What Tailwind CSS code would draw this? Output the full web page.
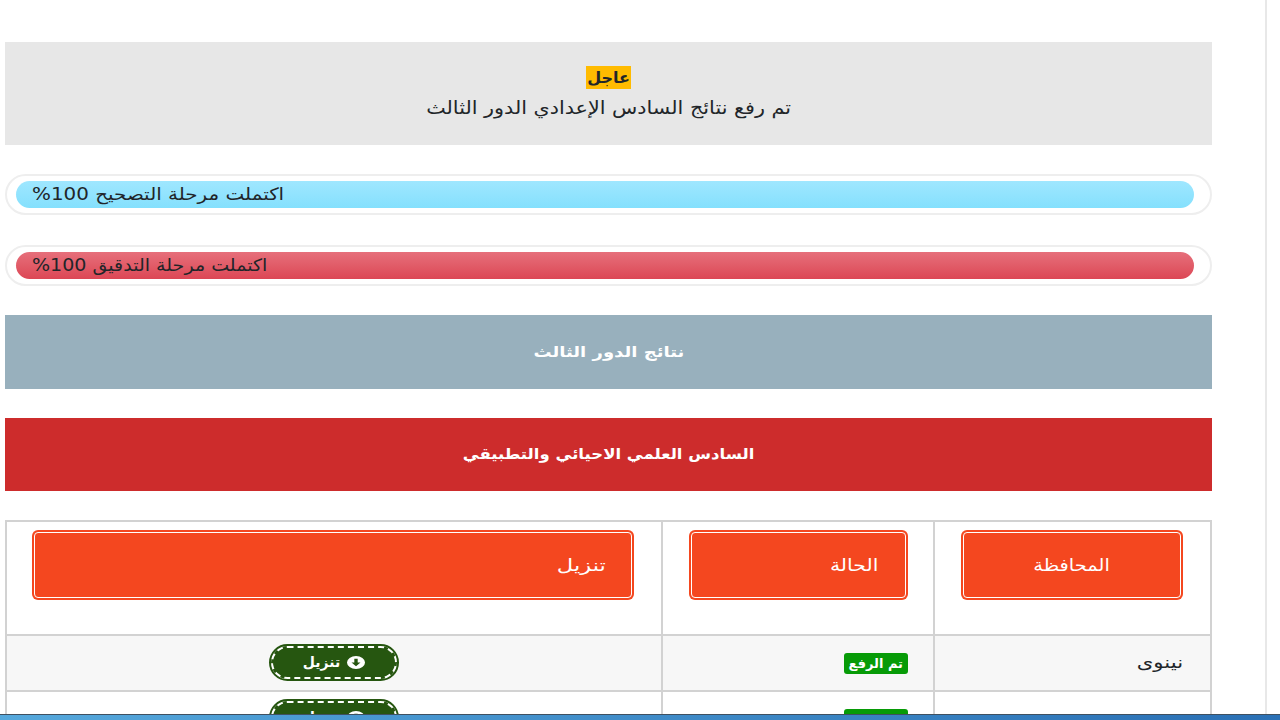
<!DOCTYPE html>
<html lang="ar">
<head>
<meta charset="UTF-8">
<title>نتائج الدور الثالث</title>
<script src="https://cdn.jsdelivr.net/npm/@tailwindcss/browser@4"></script>
</head>
<body class="h-[720px] overflow-hidden bg-white font-['DejaVu_Sans',sans-serif] text-[#212529]">
<div class="relative h-[720px] overflow-hidden">
  <div class="h-[720px] w-[1267px] border-r-2 border-[#e8e8e8] pl-[5px] pr-[53px] pt-[42px]">
   <div dir="rtl">

    <div class="flex h-[103px] flex-col items-center bg-[#e7e7e7] pt-[24px]">
      <span class="bg-[#ffbb00] px-[1px] text-[16px] leading-[23px] font-bold">عاجل</span>
      <p class="mt-[6px] scale-x-[1.15] text-[18px] leading-[26px]">تم رفع نتائج السادس الإعدادي الدور الثالث</p>
    </div>

    <div class="mt-[29px] h-[41px] rounded-full border-2 border-[#eeeeee] pl-[9px] pr-[16px] py-[5px]">
      <div class="flex h-[27px] items-center justify-end rounded-full bg-gradient-to-b from-[#9fe7ff] to-[#84e0fd] pl-[16px] text-[17px]">
        <span class="inline-block origin-left scale-x-[1.17]">اكتملت مرحلة التصحيح 100%</span>
      </div>
    </div>

    <div class="mt-[30px] h-[41px] rounded-full border-2 border-[#eeeeee] pl-[9px] pr-[16px] py-[5px]">
      <div class="flex h-[27px] items-center justify-end rounded-full bg-gradient-to-b from-[#e66f7b] to-[#dc4655] pl-[16px] text-[17px]">
        <span class="inline-block origin-left scale-x-[1.12]">اكتملت مرحلة التدقيق 100%</span>
      </div>
    </div>

    <div class="mt-[29px] flex h-[74px] items-center justify-center bg-[#98b0bd] text-[15px] font-bold text-white"><span class="inline-block scale-x-[1.2]">نتائج الدور الثالث</span></div>
    <div class="mt-[29px] flex h-[73px] items-center justify-center bg-[#cd2c2c] text-[15px] font-bold text-white"><span class="inline-block scale-x-[1.1]">السادس العلمي الاحيائي والتطبيقي</span></div>

    <table class="mt-[29px] w-[1207px] table-fixed border-collapse border-2 border-[#d2d2d2] text-[17px]">
      <colgroup><col class="w-[277px]"><col class="w-[272px]"><col></colgroup>
      <tbody>
        <tr class="h-[114px] align-top">
          <td class="border-2 border-[#d2d2d2] pt-[8px] pr-[27px]">
            <div class="flex h-[70px] w-[222px] items-center justify-center rounded-[6px] bg-[#f4471f] pt-[2px] text-white outline outline-1 -outline-offset-3 outline-white"><span class="inline-block scale-x-[1.14]">المحافظة</span></div>
          </td>
          <td class="border-2 border-[#d2d2d2] pt-[8px] pr-[25px]">
            <div class="flex h-[70px] w-[219px] items-center rounded-[6px] bg-[#f4471f] pr-[30px] pt-[2px] text-white outline outline-1 -outline-offset-3 outline-white"><span class="inline-block origin-right scale-x-[1.2]">الحالة</span></div>
          </td>
          <td class="border-2 border-[#d2d2d2] pt-[8px] pr-[27px]">
            <div class="flex h-[70px] w-[602px] items-center rounded-[6px] bg-[#f4471f] pr-[28px] pt-[2px] text-white outline outline-1 -outline-offset-3 outline-white"><span class="inline-block origin-right scale-x-[1.33]">تنزيل</span></div>
          </td>
        </tr>
        <tr class="h-[56px] bg-[#f7f7f7]">
          <td class="border-2 border-[#d2d2d2] pr-[27px]"><span class="inline-block origin-right scale-x-[1.25]">نينوى</span></td>
          <td class="border-2 border-[#d2d2d2] pr-[25px]">
            <span class="inline-block rounded-[3px] bg-[#079b07] px-[5px] text-[13px] leading-[21px] font-bold text-white">تم الرفع</span>
          </td>
          <td class="border-2 border-[#d2d2d2] text-center">
            <a class="mb-[2px] inline-flex h-[33px] w-[126px] items-center justify-center gap-[7px] rounded-full border-2 border-dashed border-white bg-[#265610] text-[14px] font-bold text-white outline-2 outline-[#265610]">
              <svg viewBox="0 0 16 16" preserveAspectRatio="none" class="h-[13px] w-[18px]"><circle cx="8" cy="8" r="8" fill="#fff"/><path d="M6.5 3.5h3V8H12l-4 4.5L4 8h2.5z" fill="#265610"/></svg>
              <span>تنزيل</span>
            </a>
          </td>
        </tr>
        <tr class="h-[56px] align-top">
          <td class="border-2 border-[#d2d2d2] pt-[19px] pr-[27px]"><span class="inline-block origin-right scale-x-[1.25]">بابل</span></td>
          <td class="border-2 border-[#d2d2d2] pt-[14px] pr-[25px]">
            <span class="inline-block rounded-[3px] bg-[#079b07] px-[5px] text-[13px] leading-[21px] font-bold text-white">تم الرفع</span>
          </td>
          <td class="border-2 border-[#d2d2d2] pt-[9px] text-center">
            <a class="inline-flex h-[33px] w-[126px] items-center justify-center gap-[7px] rounded-full border-2 border-dashed border-white bg-[#265610] text-[14px] font-bold text-white outline-2 outline-[#265610]">
              <svg viewBox="0 0 16 16" preserveAspectRatio="none" class="h-[13px] w-[18px]"><circle cx="8" cy="8" r="8" fill="#fff"/><path d="M6.5 3.5h3V8H12l-4 4.5L4 8h2.5z" fill="#265610"/></svg>
              <span>تنزيل</span>
            </a>
          </td>
        </tr>
      </tbody>
    </table>
   </div>
  </div>
  <!-- taskbar of the captured desktop, lies over the page -->
  <div class="absolute bottom-0 left-0 h-[6px] w-full border-t border-[#3f5060] bg-gradient-to-r from-[#55a8dc] to-[#2a70b5]"></div>
</div>
</body>
</html>
